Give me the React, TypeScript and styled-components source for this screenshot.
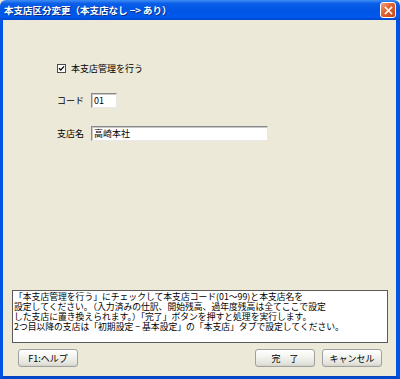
import styled, { createGlobalStyle } from "styled-components";

const GlobalStyle = createGlobalStyle`
  html, body {
    margin: 0;
    padding: 0;
    background: #ece9d8;
  }
  body {
    font-family: "Noto Sans CJK JP", "Noto Sans", sans-serif;
  }
`;

const Window = styled.div`
  width: 400px;
  height: 379px;
  display: flex;
  flex-direction: column;
  box-sizing: border-box;
  overflow: hidden;
`;

const TitleBar = styled.div`
  height: 20px;
  flex-shrink: 0;
  display: flex;
  align-items: center;
  justify-content: space-between;
  padding: 0 4px 0 4px;
  background: linear-gradient(
    #3d8cf5 0%,
    #0a5ee8 18%,
    #0055e5 50%,
    #0058ee 85%,
    #0047c8 100%
  );
  border-radius: 6px 6px 0 0;
`;

const Title = styled.span`
  color: #fff;
  font-size: 9.5px;
  font-weight: bold;
  text-shadow: 1px 1px 0 #0a2a80;
  white-space: nowrap;
`;

const CloseButton = styled.div`
  width: 14px;
  height: 14px;
  border: 1px solid #fff;
  border-radius: 3px;
  background: linear-gradient(135deg, #f1a083 0%, #e2602f 45%, #c84518 100%);
  display: flex;
  align-items: center;
  justify-content: center;
`;

const Body = styled.div`
  flex: 1;
  display: flex;
  flex-direction: column;
  background: #ece9d8;
  border-left: 3px solid #0054e3;
  border-right: 4px solid #0054e3;
  border-bottom: 3px solid #0046c7;
`;

const Form = styled.div`
  display: flex;
  flex-direction: column;
  padding: 43px 0 0 54px;
`;

const CheckRow = styled.label`
  display: flex;
  align-items: center;
  gap: 5px;
  height: 10px;
  font-size: 9px;
  color: #000;
`;

const CheckBox = styled.span`
  width: 7px;
  height: 7px;
  border: 1px solid #4a4a4a;
  background: #fff;
  display: flex;
  align-items: center;
  justify-content: center;
`;

const FieldRow = styled.div<{ $top: number }>`
  display: flex;
  align-items: center;
  margin-top: ${(p) => p.$top}px;
  height: 15px;
`;

const Label = styled.span`
  width: 34px;
  font-size: 9px;
  color: #000;
  white-space: nowrap;
`;

const TextBox = styled.div<{ $width: number }>`
  width: ${(p) => p.$width}px;
  height: 15px;
  box-sizing: border-box;
  background: #fff;
  border: 1px solid;
  border-color: #8a8a8a #e8e8e8 #e8e8e8 #8a8a8a;
  box-shadow: inset 1px 1px 0 #c8c8c8;
  font-size: 9px;
  line-height: 13px;
  padding-left: 2px;
  color: #000;
  white-space: nowrap;
`;

const Spacer = styled.div`
  flex: 1;
`;

const Message = styled.div`
  margin: 0 8px 0 9px;
  height: 53px;
  box-sizing: border-box;
  background: #fff;
  border: 1px solid #5a5a5a;
  padding: 1px 1px;
  font-size: 8.8px;
  line-height: 10px;
  color: #000;
  white-space: nowrap;
  overflow: hidden;
`;

const ButtonRow = styled.div`
  display: flex;
  align-items: center;
  padding: 6px 14px 9px 15px;
`;

const Button = styled.div`
  width: 60px;
  height: 18px;
  box-sizing: border-box;
  border: 1px solid #a0a0a0;
  border-radius: 3px;
  background: linear-gradient(#ffffff 0%, #f4f4f0 40%, #e3e3dc 85%, #d2d2c8 100%);
  display: flex;
  align-items: center;
  justify-content: center;
  font-size: 9px;
  color: #000;
  white-space: nowrap;
`;

const RightButtons = styled.div`
  margin-left: auto;
  display: flex;
  gap: 7px;
`;

export default function App() {
  return (
    <>
      <GlobalStyle />
      <Window>
        <TitleBar>
          <Title>本支店区分変更（本支店なし −&gt; あり）</Title>
          <CloseButton>
            <svg width="9" height="9" viewBox="0 0 9 9">
              <path d="M1.5 1.5 L7.5 7.5 M7.5 1.5 L1.5 7.5" stroke="#fff" strokeWidth="1.6" strokeLinecap="square" />
            </svg>
          </CloseButton>
        </TitleBar>
        <Body>
          <Form>
            <CheckRow>
              <CheckBox>
                <svg width="7" height="7" viewBox="0 0 7 7">
                  <path d="M1 3.2 L2.8 5 L6 1.4" stroke="#111" strokeWidth="1.4" fill="none" />
                </svg>
              </CheckBox>
              本支店管理を行う
            </CheckRow>
            <FieldRow $top={20}>
              <Label>コード</Label>
              <TextBox $width={26}>01</TextBox>
            </FieldRow>
            <FieldRow $top={18}>
              <Label>支店名</Label>
              <TextBox $width={177}>高崎本社</TextBox>
            </FieldRow>
          </Form>
          <Spacer />
          <Message>
            「本支店管理を行う」にチェックして本支店コード(01～99)と本支店名を
            <br />
            設定してください。（入力済みの仕訳、開始残高、過年度残高は全てここで設定
            <br />
            した支店に置き換えられます。）「完了」ボタンを押すと処理を実行します。
            <br />
            2つ目以降の支店は「初期設定 − 基本設定」の「本支店」タブで設定してください。
          </Message>
          <ButtonRow>
            <Button>F1:ヘルプ</Button>
            <RightButtons>
              <Button>完　了</Button>
              <Button>キャンセル</Button>
            </RightButtons>
          </ButtonRow>
        </Body>
      </Window>
    </>
  );
}
